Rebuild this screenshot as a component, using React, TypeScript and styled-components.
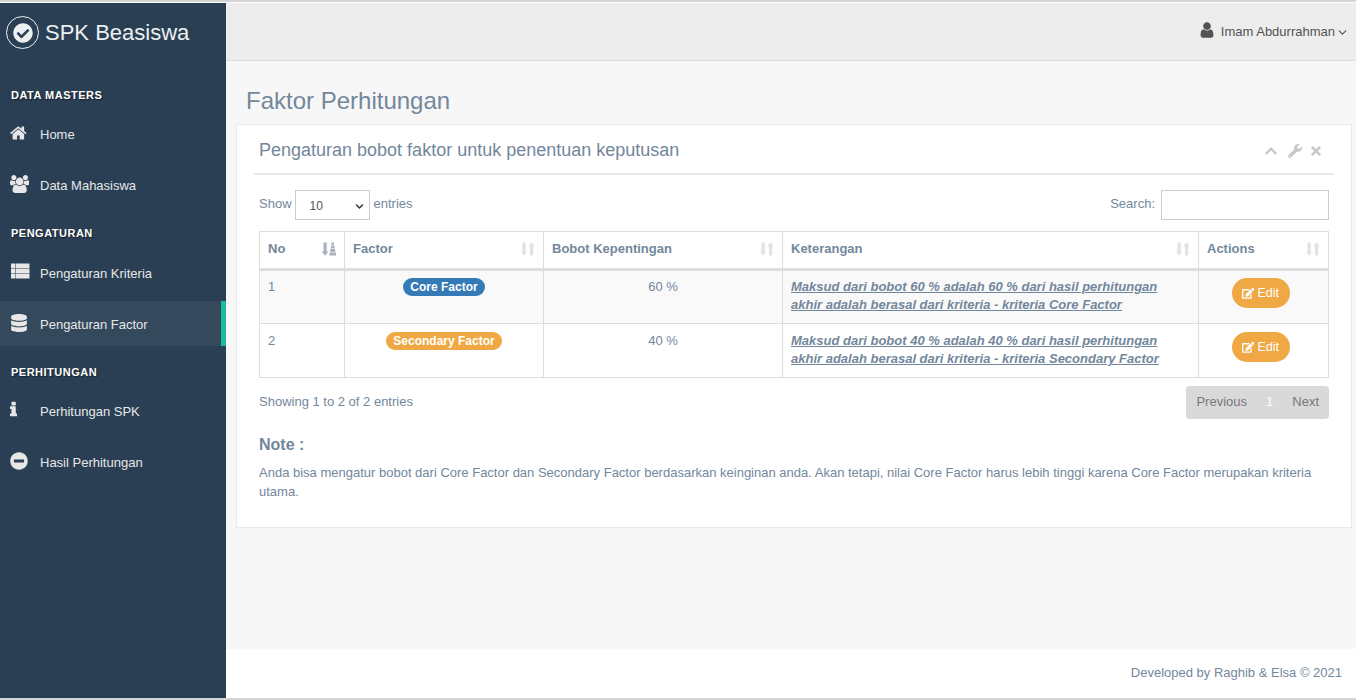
import { createGlobalStyle, styled } from "styled-components";
import {
  FaCheckCircle,
  FaChevronDown,
  FaChevronUp,
  FaDatabase,
  FaEdit,
  FaMinusCircle,
  FaTimes,
  FaWrench,
} from "react-icons/fa";
import { FiChevronDown } from "react-icons/fi";
import type { ReactNode } from "react";

const GlobalStyle = createGlobalStyle`
  * { box-sizing: border-box; }
  html, body { margin: 0; height: 100%; }
  body {
    font-family: "Liberation Sans", Arial, sans-serif;
    font-size: 13px;
    color: #73879c;
    background: #fff;
    overflow: hidden;
  }
`;

const Page = styled.div`
  width: 1356px;
  height: 700px;
  display: flex;
  padding: 3px 0 2px;
  background: #fff;
  box-shadow: inset 0 2px 0 #d4d4d4, inset 0 -2px 0 #d4d4d4;
`;

const Sidebar = styled.aside`
  width: 226px;
  flex: none;
  background: #2a3f54;
  color: #e7e7e7;
`;

const Brand = styled.div`
  display: flex;
  align-items: center;
  gap: 6px;
  height: 57px;
  margin-bottom: 28px;
  padding: 2px 0 0 6px;
  color: #ecf0f1;
  font-size: 22px;
`;

const BrandRing = styled.span`
  width: 33px;
  height: 33px;
  border: 1px solid #ecf0f1;
  border-radius: 50%;
  display: flex;
  align-items: center;
  justify-content: center;
  font-size: 20px;
`;

const SectionTitle = styled.h3`
  margin: 0;
  padding-left: 11px;
  height: 14px;
  line-height: 14px;
  font-size: 11px;
  font-weight: 700;
  letter-spacing: 0.5px;
  color: #fff;
  text-shadow: 1px 1px 1px rgba(0, 0, 0, 0.5);
`;

const NavList = styled.nav`
  display: flow-root;
  margin: 0 0 12px;
  padding-top: 10.3px;
`;

const NavRow = styled.div<{ $active?: boolean }>`
  height: ${(p) => (p.$active ? "45px" : "46px")};
  margin: ${(p) => (p.$active ? "-0.6px 0 6.6px" : "0 0 5px")};
  display: flex;
  align-items: flex-start;
  padding: ${(p) => (p.$active ? "15.6px" : "15px")} 0 0 10px;
  font-size: 13px;
  line-height: 16px;
  color: #e7e7e7;
  background: ${(p) => (p.$active ? "#35495d" : "transparent")};
  border-right: ${(p) => (p.$active ? "5px solid #1abb9c" : "0")};
`;

const NavIcon = styled.span`
  width: 30px;
  height: 16px;
  flex: none;
  font-size: 18px;
  color: #e7e7e7;
  display: flex;
  align-items: flex-start;
  svg { margin-top: -3px; }
`;

const Glyph = styled.svg`
  height: 18px;
  fill: currentColor;
`;

const Main = styled.main`
  flex: 1;
  min-width: 0;
  display: flex;
  flex-direction: column;
  background: #f7f7f7;
`;

const TopNav = styled.header`
  height: 58px;
  flex: none;
  background: #ededed;
  border-bottom: 1px solid #d9dee4;
  display: flex;
  justify-content: flex-end;
  align-items: center;
  padding: 0 7px 1px 0;
  color: #515356;
  font-size: 13px;
`;

const TopUserIcon = styled.svg`
  width: 18px;
  height: 18px;
  margin: -3px 5px 0 0;
  fill: #515356;
`;

const Caret = styled(FiChevronDown)`
  font-size: 13px;
  margin: 2px 0 0 1px;
`;

const Content = styled.div`
  flex: 1;
  padding: 26px 4px 0 10px;
`;

const PageTitle = styled.h1`
  margin: 0 0 9px 10px;
  height: 28px;
  line-height: 28px;
  font-size: 24px;
  font-weight: 400;
  color: #73879c;
`;

const Panel = styled.section`
  height: 404px;
  background: #fff;
  border: 1px solid #e6e9ed;
  padding: 10px 17px;
`;

const PanelHeader = styled.div`
  height: 40px;
  display: flex;
  justify-content: space-between;
  align-items: flex-start;
  border-bottom: 2px solid #e6e9ed;
  padding: 4px 5px 0;
`;

const PanelTitle = styled.h2`
  margin: 0;
  font-size: 18px;
  line-height: 22px;
  font-weight: 400;
  color: #73879c;
`;

const PanelTools = styled.div`
  display: flex;
  gap: 10px;
  padding: 5px 6px 0 0;
  color: #c5c7cb;
  font-size: 14px;
  svg:last-child { margin-left: -3px; }
`;

const Body = styled.div`
  padding: 15px 5px 0;
`;

const TableControls = styled.div`
  height: 30px;
  display: flex;
  justify-content: space-between;
  align-items: center;
`;

const ControlGroup = styled.label`
  display: flex;
  align-items: center;
  gap: 3px;
  padding-bottom: 4px;
`;

const FakeSelect = styled.span`
  width: 75px;
  height: 30px;
  margin: 0 1px -4px 0;
  border: 1px solid #ccc;
  display: flex;
  align-items: center;
  justify-content: space-between;
  padding: 2px 5px 0 14px;
  font-size: 12px;
  color: #555;
  svg { font-size: 9px; color: #333; }
`;

const SearchBox = styled.span`
  width: 168px;
  height: 30px;
  margin: 0 0 -4px 3px;
  border: 1px solid #ccc;
`;

const Table = styled.table`
  width: 1069px;
  margin-top: 11px;
  border-collapse: collapse;
  table-layout: fixed;
  font-size: 13px;
`;

const HeadCell = styled.th<{ $width: number }>`
  width: ${(p) => p.$width}px;
  height: 38px;
  padding: 0 8px 3px;
  text-align: left;
  font-weight: 700;
  color: #73879c;
  border: 1px solid #ddd;
  border-bottom: 3px solid #ddd;
`;

const HeadInner = styled.div`
  display: flex;
  justify-content: space-between;
  align-items: center;
`;

const SortIcon = styled.svg<{ $on?: boolean }>`
  width: 14px;
  height: 14px;
  fill: ${(p) => (p.$on ? "#a9b3be" : "#dfe3e6")};
`;

const Row = styled.tr<{ $odd?: boolean }>`
  height: 54px;
  background: ${(p) => (p.$odd ? "#f9f9f9" : "#fff")};
`;

const Cell = styled.td<{ $center?: boolean }>`
  padding: 7px 8px;
  line-height: 18px;
  vertical-align: top;
  border: 1px solid #ddd;
  text-align: ${(p) => (p.$center ? "center" : "left")};
  tr + tr & { padding-top: 8px; }
`;

const ActionCell = styled(Cell)`
  padding: 7px 6px 0 0;
`;

const Badge = styled.span<{ $color: string }>`
  display: inline-block;
  padding: 0 7px;
  height: 18px;
  line-height: 18px;
  border-radius: 9px;
  font-size: 12px;
  font-weight: 700;
  color: #fff;
  background: ${(p) => p.$color};
`;

const Description = styled.a`
  display: block;
  padding-right: 20px;
  color: #73879c;
  font-weight: 700;
  font-style: italic;
  text-decoration: underline;
`;

const EditButton = styled.button`
  width: 58px;
  height: 30px;
  border: 0;
  border-radius: 15px;
  background: #efa843;
  color: #fff;
  font: 12.5px "Liberation Sans", Arial, sans-serif;
  display: inline-flex;
  align-items: center;
  justify-content: center;
  gap: 3px;
  padding: 0;
`;

const TableFooter = styled.div`
  display: flex;
  justify-content: space-between;
  align-items: flex-start;
  margin-top: 8px;
`;

const Info = styled.div`
  padding-top: 8px;
`;

const Pager = styled.div`
  height: 33px;
  display: flex;
  align-items: center;
  gap: 19px;
  padding: 0 10px 2px;
  background: #d9d9d9;
  border-radius: 4px;
  color: #777;
  font-size: 13px;
`;

const PagerCurrent = styled.span`
  color: #fff;
`;

const NoteTitle = styled.h4`
  margin: 16px 0 0;
  font-size: 16px;
  line-height: 20px;
  font-weight: 700;
`;

const NoteText = styled.p`
  margin: 8px 0 0;
  line-height: 19px;
`;

const Footer = styled.footer`
  height: 49px;
  flex: none;
  background: #fff;
  text-align: right;
  padding: 15px 14px 0 0;
  line-height: 18px;
`;

const HomeIcon = () => (
  <Glyph viewBox="0 0 1792 1792">
    <path d="M1408 992v480q0 26-19 45t-45 19h-384v-384h-256v384h-384q-26 0-45-19t-19-45v-480q0-1 .5-3t.5-3l575-474 575 474q1 2 1 6zm223-69l-62 74q-8 9-21 11h-3q-13 0-21-7l-692-577-692 577q-12 8-24 7-13-2-21-11l-62-74q-8-10-7-23.500t11-21.500l719-599q32-26 76-26t76 26l244 204v-195q0-14 9-23t23-9h192q14 0 23 9t9 23v408l219 182q10 8 11 21.500t-7 23.500z" />
  </Glyph>
);

const UsersIcon = () => (
  <Glyph viewBox="0 0 1920 1792">
    <path d="M593 896q-162 5-265 128h-134q-82 0-138-40.500t-56-118.500q0-353 124-353 6 0 43.500 21t97.500 42.500 119 21.500q67 0 133-23-5 37-5 66 0 139 81 256zm1071 637q0 120-73 189.500t-194 69.500h-874q-121 0-194-69.500t-73-189.500q0-53 3.500-103.500t14-109 26.500-108.500 43-97.500 62-81 85.500-53.500 111.500-20q10 0 43 21.500t73 48 107 48 135 21.500 135-21.500 107-48 73-48 43-21.500q61 0 111.500 20t85.500 53.500 62 81 43 97.500 26.500 108.500 14 109 3.500 103.500zm-1024-1277q0 106-75 181t-181 75-181-75-75-181 75-181 181-75 181 75 75 181zm704 384q0 159-112.500 271.500t-271.500 112.500-271.500-112.500-112.500-271.500 112.500-271.500 271.500-112.500 271.500 112.500 112.500 271.500zm576 225q0 78-56 118.500t-138 40.500h-134q-103-123-265-128 81-117 81-256 0-29-5-66 66 23 133 23 59 0 119-21.500t97.500-42.500 43.500-21q124 0 124 353zm-128-609q0 106-75 181t-181 75-181-75-75-181 75-181 181-75 181 75 75 181z" />
  </Glyph>
);

const RowsIcon = () => (
  <Glyph viewBox="0 0 20 18">
    <path d="M1 .5h4.500v4.700H1zM6 .5H19.500v4.700H6zM1 5.700h4.500v4.700H1zM6 5.700H19.500v4.700H6zM1 10.900h4.500v4.700H1zM6 10.900H19.500v4.700H6z" />
  </Glyph>
);

const InfoIcon = () => (
  <Glyph viewBox="0 100 640 1592">
    <path d="M640 1264v128q0 26-19 45t-45 19h-512q-26 0-45-19t-19-45v-128q0-26 19-45t45-19h64v-384h-64q-26 0-45-19t-19-45v-128q0-26 19-45t45-19h384q26 0 45 19t19 45v576h64q26 0 45 19t19 45zm-128-1024v192q0 26-19 45t-45 19h-256q-26 0-45-19t-19-45v-192q0-26 19-45t45-19h256q26 0 45 19t19 45z" />
  </Glyph>
);

type NavItem = { icon: ReactNode; label: string; active?: boolean };

const navSections: { title: string; items: NavItem[] }[] = [
  {
    title: "DATA MASTERS",
    items: [
      { icon: <HomeIcon />, label: "Home" },
      { icon: <UsersIcon />, label: "Data Mahasiswa" },
    ],
  },
  {
    title: "PENGATURAN",
    items: [
      { icon: <RowsIcon />, label: "Pengaturan Kriteria" },
      { icon: <FaDatabase />, label: "Pengaturan Factor", active: true },
    ],
  },
  {
    title: "PERHITUNGAN",
    items: [
      { icon: <InfoIcon />, label: "Perhitungan SPK" },
      { icon: <FaMinusCircle />, label: "Hasil Perhitungan" },
    ],
  },
];

const columns = [
  { label: "No", width: 85, on: true },
  { label: "Factor", width: 199 },
  { label: "Bobot Kepentingan", width: 239 },
  { label: "Keterangan", width: 416 },
  { label: "Actions", width: 130 },
];

const rows = [
  { no: 1, factor: "Core Factor", color: "#337ab7", bobot: 60 },
  { no: 2, factor: "Secondary Factor", color: "#efa843", bobot: 40 },
];

const Sort = ({ on }: { on?: boolean }) => (
  <SortIcon viewBox="0 0 14 14" $on={on}>
    {on ? (
      <path d="M1.500 .5h3.200v9h1.700L3.100 13.700-.2 9.500h1.700zM7.500 10.500h6.500v3H7.500zM8.200 7h5v3H8.200zM9 3.500h3.500v3H9zM9.500 .5h2.500v2.500H9.500z" />
    ) : (
      <path d="M1.500 .5h3.200v9h1.700L3.100 13.700-.2 9.500h1.700zM9 13.500v-9H7.300L10.600.3 13.900 4.500h-1.700v9z" />
    )}
  </SortIcon>
);

export default function App() {
  return (
    <>
      <GlobalStyle />
      <Page>
        <Sidebar>
          <Brand>
            <BrandRing>
              <FaCheckCircle />
            </BrandRing>
            SPK Beasiswa
          </Brand>
          {navSections.map((section) => (
            <div key={section.title}>
              <SectionTitle>{section.title}</SectionTitle>
              <NavList>
                {section.items.map((item) => (
                  <NavRow key={item.label} $active={item.active}>
                    <NavIcon>{item.icon}</NavIcon>
                    {item.label}
                  </NavRow>
                ))}
              </NavList>
            </div>
          ))}
        </Sidebar>
        <Main>
          <TopNav>
            <TopUserIcon viewBox="0 0 1792 1792">
              <path d="M1536 1399q0 109-62.500 187t-150.500 78h-854q-88 0-150.500-78t-62.500-187q0-85 8.500-160.500t31.500-152 58.500-131 94-89 134.500-34.500q131 128 313 128t313-128q76 0 134.500 34.500t94 89 58.500 131 31.500 152 8.500 160.500zm-256-887q0 159-112.500 271.500t-271.500 112.500-271.500-112.500-112.500-271.500 112.500-271.500 271.500-112.500 271.500 112.500 112.500 271.500z" />
            </TopUserIcon>
            Imam Abdurrahman
            <Caret />
          </TopNav>
          <Content>
            <PageTitle>Faktor Perhitungan</PageTitle>
            <Panel>
              <PanelHeader>
                <PanelTitle>Pengaturan bobot faktor untuk penentuan keputusan</PanelTitle>
                <PanelTools>
                  <FaChevronUp />
                  <FaWrench />
                  <FaTimes />
                </PanelTools>
              </PanelHeader>
              <Body>
                <TableControls>
                  <ControlGroup>
                    Show
                    <FakeSelect>
                      10
                      <FaChevronDown />
                    </FakeSelect>
                    entries
                  </ControlGroup>
                  <ControlGroup>
                    Search:
                    <SearchBox />
                  </ControlGroup>
                </TableControls>
                <Table>
                  <thead>
                    <tr>
                      {columns.map((col) => (
                        <HeadCell key={col.label} $width={col.width}>
                          <HeadInner>
                            {col.label}
                            <Sort on={col.on} />
                          </HeadInner>
                        </HeadCell>
                      ))}
                    </tr>
                  </thead>
                  <tbody>
                    {rows.map((row) => (
                      <Row key={row.no} $odd={row.no % 2 === 1}>
                        <Cell>{row.no}</Cell>
                        <Cell $center>
                          <Badge $color={row.color}>{row.factor}</Badge>
                        </Cell>
                        <Cell $center>{`${row.bobot} %`}</Cell>
                        <Cell>
                          <Description>
                            {`Maksud dari bobot ${row.bobot} % adalah ${row.bobot} % dari hasil perhitungan akhir adalah berasal dari kriteria - kriteria ${row.factor}`}
                          </Description>
                        </Cell>
                        <ActionCell $center>
                          <EditButton>
                            <FaEdit />
                            Edit
                          </EditButton>
                        </ActionCell>
                      </Row>
                    ))}
                  </tbody>
                </Table>
                <TableFooter>
                  <Info>Showing 1 to 2 of 2 entries</Info>
                  <Pager>
                    <span>Previous</span>
                    <PagerCurrent>1</PagerCurrent>
                    <span>Next</span>
                  </Pager>
                </TableFooter>
                <NoteTitle>Note :</NoteTitle>
                <NoteText>
                  Anda bisa mengatur bobot dari Core Factor dan Secondary Factor berdasarkan keinginan anda. Akan
                  tetapi, nilai Core Factor harus lebih tinggi karena Core Factor merupakan kriteria utama.
                </NoteText>
              </Body>
            </Panel>
          </Content>
          <Footer>Developed by Raghib &amp; Elsa © 2021</Footer>
        </Main>
      </Page>
    </>
  );
}
